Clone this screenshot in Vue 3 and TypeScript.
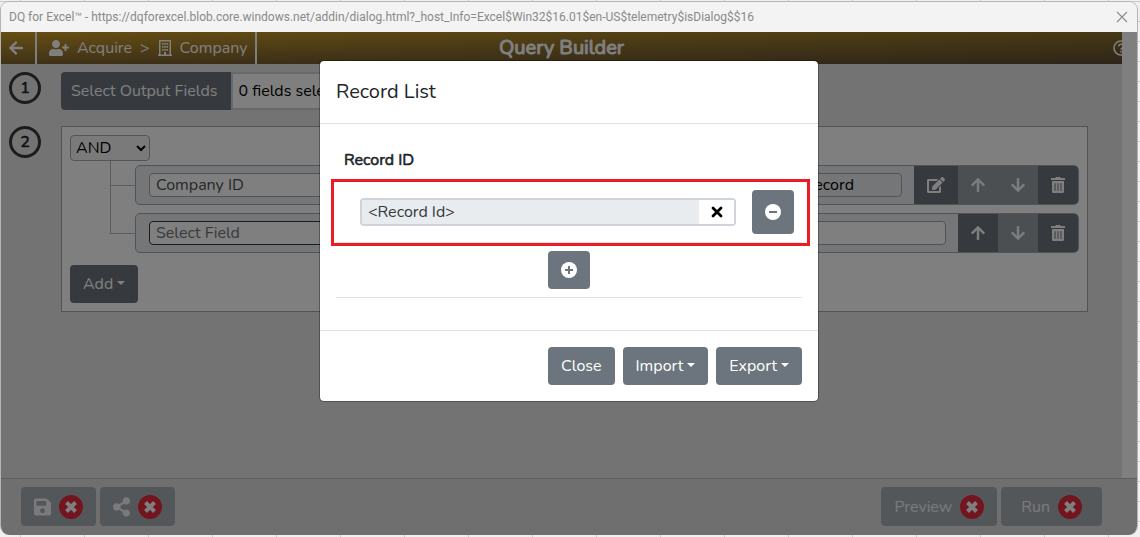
<script setup lang="ts">
import { ref } from 'vue'

interface Action {
  label: string
  icon: string
  disabled?: boolean
  wide?: boolean
}
interface Condition {
  field: string
  placeholder: string
  detail: string
  focused: boolean
  actions: Action[]
}

const arrow =
  'M34.9 289.5l-22.2-22.2c-9.4-9.4-9.4-24.6 0-33.9L207 39c9.4-9.4 24.6-9.4 33.9 0l194.3 194.3c9.4 9.4 9.4 24.6 0 33.9L413 289.4c-9.5 9.5-25 9.3-34.3-.4L264 168.6V456c0 13.3-10.7 24-24 24h-32c-13.3 0-24-10.7-24-24V168.6L69.2 289.1c-9.3 9.8-24.8 10-34.3.4z'
const icons: Record<string, { box: string; d: string }> = {
  up: { box: '0 0 448 512', d: arrow },
  down: { box: '0 0 448 512', d: arrow },
  edit: {
    box: '0 0 576 512',
    d: 'M402.6 83.2l90.2 90.2c3.8 3.8 3.8 10 0 13.8L274.4 405.6l-92.8 10.3c-12.4 1.4-22.9-9.1-21.5-21.5l10.3-92.8L388.8 83.2c3.8-3.8 10-3.8 13.8 0zm162-22.9l-48.8-48.8c-15.2-15.2-39.9-15.2-55.2 0l-35.4 35.4c-3.8 3.8-3.8 10 0 13.8l90.2 90.2c3.8 3.8 10 3.8 13.8 0l35.4-35.4c15.2-15.3 15.2-40 0-55.2zM384 346.2V448H64V128h229.8c3.2 0 6.2-1.3 8.5-3.5l40-40c7.6-7.6 2.2-20.5-8.5-20.5H48C21.5 64 0 85.5 0 112v352c0 26.5 21.5 48 48 48h352c26.5 0 48-21.5 48-48V306.2c0-10.7-12.9-16-20.5-8.5l-40 40c-2.2 2.3-3.5 5.3-3.5 8.5z',
  },
  trash: {
    box: '0 0 448 512',
    d: 'M32 464a48 48 0 0 0 48 48h288a48 48 0 0 0 48-48V128H32zm272-256a16 16 0 0 1 32 0v224a16 16 0 0 1-32 0zm-96 0a16 16 0 0 1 32 0v224a16 16 0 0 1-32 0zm-96 0a16 16 0 0 1 32 0v224a16 16 0 0 1-32 0zM432 32H312l-9.4-18.7A24 24 0 0 0 281.1 0H166.8a23.72 23.72 0 0 0-21.4 13.3L136 32H16A16 16 0 0 0 0 48v32a16 16 0 0 0 16 16h416a16 16 0 0 0 16-16V48a16 16 0 0 0-16-16z',
  },
}

const operator = ref('AND')
const recordId = ref('<Record Id>')
const outputFields = ref('0 fields selected')

const conditions = ref<Condition[]>([
  {
    field: 'Company ID',
    placeholder: 'Select Field',
    detail: '1 record',
    focused: false,
    actions: [
      { label: 'Edit', icon: 'edit', wide: true },
      { label: 'Move up', icon: 'up', disabled: true },
      { label: 'Move down', icon: 'down', disabled: true },
      { label: 'Delete', icon: 'trash' },
    ],
  },
  {
    field: '',
    placeholder: 'Select Field',
    detail: '',
    focused: true,
    actions: [
      { label: 'Move up', icon: 'up' },
      { label: 'Move down', icon: 'down', disabled: true },
      { label: 'Delete', icon: 'trash' },
    ],
  },
])
</script>

<template>
  <div class="sheet">
    <div class="window">
      <header class="titlebar">
        <span class="address">DQ for Excel™ - https://dqforexcel.blob.core.windows.net/addin/dialog.html?_host_Info=Excel$Win32$16.01$en-US$telemetry$isDialog$$16</span>
        <button class="win-close" aria-label="Close window">
          <svg viewBox="0 0 12 12" width="12" height="12"><path d="M1 1l10 10M11 1L1 11" fill="none" stroke="#8c8c8c" stroke-width="1.1" /></svg>
        </button>
      </header>

      <div class="content">
        <div class="scroller">
          <div class="page">
            <nav class="navbar">
              <a class="back" href="#" aria-label="Back">
                <svg viewBox="0 0 448 512" width="14" height="16"><path :d="arrow" transform="rotate(-90 224 256)" /></svg>
              </a>
              <div class="crumbs">
                <a href="#">
                  <svg viewBox="0 0 640 512" width="20" height="16"><path d="M624 208h-64v-64c0-8.8-7.2-16-16-16h-32c-8.8 0-16 7.2-16 16v64h-64c-8.8 0-16 7.2-16 16v32c0 8.8 7.2 16 16 16h64v64c0 8.8 7.2 16 16 16h32c8.8 0 16-7.2 16-16v-64h64c8.8 0 16-7.2 16-16v-32c0-8.8-7.2-16-16-16zm-400 48c70.7 0 128-57.3 128-128S294.7 0 224 0 96 57.3 96 128s57.3 128 128 128zm89.6 32h-16.7c-22.2 10.2-46.9 16-72.9 16s-50.6-5.8-72.9-16h-16.7C60.2 288 0 348.2 0 422.4V464c0 26.5 21.5 48 48 48h352c26.5 0 48-21.5 48-48v-41.6c0-74.2-60.2-134.4-134.4-134.4z" /></svg>
                  Acquire
                </a>
                <span>&gt;</span>
                <a href="#">
                  <svg viewBox="0 0 14 16" width="14" height="16">
                    <path fill-rule="evenodd" d="M1 .7Q1 0 1.7 0h10.600Q13 0 13 .7V14.600h1V16H0v-1.400h1zM2.500 1.500v13.100H6V12h2v2.600h3.500V1.500z" />
                    <path d="M4 3h1.600v1.800H4zM6.200 3h1.600v1.800H6.200zM8.400 3h1.600v1.800H8.400zM4 6h1.600v1.800H4zM6.200 6h1.600v1.800H6.200zM8.400 6h1.600v1.800H8.400zM4 9h1.600v1.800H4zM6.200 9h1.600v1.800H6.200zM8.400 9h1.600v1.800H8.400z" />
                  </svg>
                  Company
                </a>
              </div>
              <h1>Query Builder</h1>
              <a class="help" href="#" aria-label="Help">
                <svg viewBox="0 0 16 16" width="16" height="16" class="line"><circle cx="8" cy="8" r="7" /><path d="M5.600 6.300Q5.900 4.300 8 4.300q2.400 0 2.400 2 0 1.200-1.300 1.900-1.100.6-1.100 1.500M8 10.900v1.600" /></svg>
              </a>
            </nav>

            <main>
              <section class="step">
                <span class="num">1</span>
                <div class="output">
                  <button class="btn">Select Output Fields</button>
                  <input v-model="outputFields" aria-label="Output fields" readonly />
                </div>
              </section>

              <section class="step">
                <span class="num">2</span>
                <div class="panel">
                  <select v-model="operator" aria-label="Operator">
                    <option>AND</option>
                    <option>OR</option>
                  </select>
                  <ul class="tree">
                    <li v-for="(c, i) in conditions" :key="i">
                      <div class="rule">
                        <div class="fields">
                          <input v-model="c.field" :placeholder="c.placeholder" :class="{ focused: c.focused }" aria-label="Field" />
                          <input v-model="c.detail" class="detail" :class="{ filled: c.detail }" aria-label="Value" />
                        </div>
                        <button
                          v-for="a in c.actions"
                          :key="a.label"
                          class="act"
                          :class="{ wide: a.wide }"
                          :disabled="a.disabled"
                          :aria-label="a.label"
                        >
                          <svg :viewBox="icons[a.icon].box" height="16" :class="{ flip: a.icon === 'down' }"><path :d="icons[a.icon].d" /></svg>
                        </button>
                      </div>
                    </li>
                  </ul>
                  <button class="btn caret add">Add</button>
                </div>
              </section>
            </main>
          </div>
          <div class="scrollbar"></div>
        </div>

        <footer class="toolbar">
          <button class="tool" aria-label="Save">
            <svg viewBox="0 0 448 512" width="17" height="20"><path d="M433.941 129.941l-83.882-83.882A48 48 0 0 0 316.118 32H48C21.490 32 0 53.490 0 80v352c0 26.510 21.490 48 48 48h352c26.510 0 48-21.490 48-48V163.882a48 48 0 0 0-14.059-33.941zM224 416c-35.346 0-64-28.654-64-64 0-35.346 28.654-64 64-64s64 28.654 64 64c0 35.346-28.654 64-64 64zm96-304.520V212c0 6.627-5.373 12-12 12H76c-6.627 0-12-5.373-12-12V108c0-6.627 5.373-12 12-12h228.520c3.183 0 6.235 1.264 8.485 3.515l3.480 3.480A11.996 11.996 0 0 1 320 111.480z" /></svg>
            <svg class="bad" viewBox="0 0 24 24" width="24" height="24"><circle cx="12" cy="12" r="12" /><path d="M7.500 7.500l9 9M16.500 7.500l-9 9" /></svg>
          </button>
          <button class="tool" aria-label="Share">
            <svg viewBox="0 0 448 512" width="17" height="20"><path d="M352 320c-22.608 0-43.387 7.819-59.790 20.895l-102.486-64.054a96.551 96.551 0 0 0 0-41.683l102.486-64.054C308.613 184.181 329.392 192 352 192c53.019 0 96-42.981 96-96S405.019 0 352 0s-96 42.981-96 96c0 7.158.79 14.130 2.276 20.841L155.790 180.895C139.387 167.819 118.608 160 96 160c-53.019 0-96 42.981-96 96s42.981 96 96 96c22.608 0 43.387-7.819 59.790-20.895l102.486 64.054A96.301 96.301 0 0 0 256 416c0 53.019 42.981 96 96 96s96-42.981 96-96-42.981-96-96-96z" /></svg>
            <svg class="bad" viewBox="0 0 24 24" width="24" height="24"><circle cx="12" cy="12" r="12" /><path d="M7.500 7.500l9 9M16.500 7.500l-9 9" /></svg>
          </button>
          <span class="spacer"></span>
          <button class="tool">
            Preview
            <svg class="bad" viewBox="0 0 24 24" width="24" height="24"><circle cx="12" cy="12" r="12" /><path d="M7.500 7.500l9 9M16.500 7.500l-9 9" /></svg>
          </button>
          <button class="tool roomy">
            Run
            <svg class="bad" viewBox="0 0 24 24" width="24" height="24"><circle cx="12" cy="12" r="12" /><path d="M7.500 7.500l9 9M16.500 7.500l-9 9" /></svg>
          </button>
        </footer>

        <div class="backdrop">
          <div class="modal" role="dialog" aria-labelledby="modal-title">
            <h2 id="modal-title">Record List</h2>
            <div class="modal-body">
              <table>
                <thead>
                  <tr><th scope="col">Record ID</th></tr>
                </thead>
                <tbody>
                  <tr class="marked">
                    <td>
                      <div class="record">
                        <div class="group">
                          <input v-model="recordId" aria-label="Record ID" readonly />
                          <button class="clear" aria-label="Clear">
                            <svg viewBox="0 0 12 12" width="12" height="12"><path d="M2 2l8 8M10 2l-8 8" fill="none" stroke="#000" stroke-width="2.800" stroke-linecap="round" /></svg>
                          </button>
                        </div>
                        <button class="btn icon tall" aria-label="Remove record">
                          <svg viewBox="0 0 16 16" width="16" height="16"><circle cx="8" cy="8" r="8" /><path class="cut" d="M4 8h8" /></svg>
                        </button>
                      </div>
                    </td>
                  </tr>
                  <tr>
                    <td class="center">
                      <button class="btn icon" aria-label="Add record">
                        <svg viewBox="0 0 16 16" width="16" height="16"><circle cx="8" cy="8" r="8" /><path class="cut" d="M4 8h8M8 4v8" /></svg>
                      </button>
                    </td>
                  </tr>
                </tbody>
              </table>
            </div>
            <div class="modal-foot">
              <button class="btn">Close</button>
              <button class="btn caret">Import</button>
              <button class="btn caret">Export</button>
            </div>
          </div>
        </div>
      </div>
    </div>
  </div>
</template>

<style>
body {
  margin: 0;
}
</style>

<style scoped>
* {
  box-sizing: border-box;
}
.sheet {
  display: flex;
  min-height: 100vh;
  padding: 1px 2px 2px 0;
  background:
    repeating-linear-gradient(to right, transparent 0 20px, #c8c8c8 20px 21px, transparent 21px 64px),
    repeating-linear-gradient(to bottom, #f0f0f0 0 1px, #c8c8c8 1px 2px, #f0f0f0 2px 20px);
  font: 16px/24px Nunito, Lato, "Open Sans", sans-serif;
  color: #212529;
}
button,
input,
select {
  font: inherit;
  margin: 0;
}
button {
  cursor: pointer;
}
svg {
  display: block;
  fill: currentColor;
}
a {
  color: inherit;
  text-decoration: none;
}
.window {
  flex: 1;
  min-width: 0;
  display: flex;
  flex-direction: column;
  border: 1px solid #b4b4b4;
  border-bottom: 0;
  border-radius: 9px;
  overflow: hidden;
}
.titlebar {
  display: flex;
  align-items: center;
  justify-content: space-between;
  height: 30px;
  padding: 0 9px 0 8px;
  background: #f3f3f3;
  color: #8a8a8a;
  font: 12px/16px Roboto, "Open Sans", sans-serif;
  white-space: nowrap;
}
.win-close {
  padding: 0;
  border: 0;
  background: none;
}
.content {
  position: relative;
  flex: 1;
  display: flex;
  flex-direction: column;
}
.scroller {
  flex: 1;
  display: flex;
}
.page {
  flex: 1;
  min-width: 0;
  background: #e6e6e6;
  overflow: hidden;
}
.scrollbar {
  width: 15px;
  background: #fff;
}
.navbar {
  position: relative;
  display: flex;
  height: 32px;
  background: linear-gradient(to bottom, rgba(40, 35, 60, 0.05), rgba(40, 35, 60, 0.5)), linear-gradient(to right, #d6a424, #927428);
  color: #fff;
}
.back,
.crumbs {
  display: flex;
  align-items: center;
  border-right: 2px solid #fff;
}
.back {
  width: 36px;
  padding-left: 8px;
}
.crumbs {
  gap: 8px;
  padding: 0 8px 0 12px;
}
.crumbs a {
  display: flex;
  align-items: center;
  gap: 8px;
}
h1,
th,
.num {
  font-weight: 400;
  -webkit-text-stroke: 0.6px currentColor;
}
h1 {
  position: absolute;
  inset: 0;
  margin: 0;
  font-size: 20px;
  line-height: 32px;
  text-align: center;
  pointer-events: none;
  -webkit-text-stroke-width: 1px;
}
.help {
  position: absolute;
  top: 8px;
  right: -7px;
}
.line {
  fill: none;
  stroke: currentColor;
  stroke-width: 1.600;
}
main {
  display: grid;
  gap: 16px;
  padding: 8px 34px 16px 8px;
}
.step {
  display: flex;
  align-items: flex-start;
  gap: 20px;
}
.num {
  display: flex;
  align-items: center;
  justify-content: center;
  flex: none;
  width: 32px;
  height: 32px;
  border: 3px solid #343a40;
  border-radius: 50%;
}
.btn {
  height: 38px;
  padding: 0 13px;
  border: 0;
  border-radius: 4px;
  background: #6c757d;
  color: #fff;
  white-space: nowrap;
}
.btn.icon {
  padding: 0;
}
.caret::after {
  content: "";
  display: inline-block;
  margin-left: 4px;
  vertical-align: 4px;
  border: 4px solid transparent;
  border-top-color: currentColor;
  border-bottom: 0;
}
.output {
  display: flex;
}
.output .btn {
  padding: 0 13px 0 10px;
  border-radius: 4px 0 0 4px;
}
.output input {
  width: 300px;
  padding: 0 6px;
  border: 2px solid #ced4da;
  background: #fff;
}
.panel {
  flex: 1;
  min-width: 0;
  padding: 8px;
  border: 1px solid #a4a8ae;
  background: #fff;
}
select {
  display: block;
  width: 80px;
  height: 26px;
  padding: 0 1px;
  border: 1px solid #a4a8ae;
  border-radius: 4px;
  background: #f4f5f6;
  color: #000;
}
.tree {
  margin: 0 0 0 40px;
  padding: 4px 0 12px;
  list-style: none;
}
.tree li {
  position: relative;
  padding: 0 0 8px 25px;
}
.tree li:last-child {
  padding-bottom: 0;
}
.tree li::before {
  content: "";
  position: absolute;
  left: 0;
  top: -4px;
  width: 25px;
  height: 24px;
  border: solid #b4b8be;
  border-width: 0 0 1px 1px;
}
.tree li + li::before {
  top: -28px;
  height: 48px;
}
.add {
  display: block;
}
.rule {
  display: flex;
  height: 40px;
  border: 1px solid #a0a8b0;
  border-radius: 5px;
  background: #e9ecef;
  overflow: hidden;
}
.fields {
  flex: 1;
  display: flex;
  gap: 24px;
  padding: 7px 12px 7px 13px;
}
.fields input {
  flex: 1;
  min-width: 0;
  padding: 0 6px;
  border: 1px solid #a0a8b0;
  border-radius: 4px;
  background: #fff;
  color: #495057;
}
.fields .detail {
  flex: none;
  width: 148px;
}
.fields .filled {
  background: #e9ecef;
  color: #000;
  padding-left: 40px;
}
.fields .focused {
  border-color: #343a40;
}
.fields input::placeholder {
  color: #6c757d;
}
.act {
  display: flex;
  align-items: center;
  justify-content: center;
  width: 40px;
  padding: 0;
  border: 0;
  background: #6c757d;
  color: #fff;
}
.act.wide {
  width: 44px;
}
.act:disabled {
  opacity: 0.65;
}
.flip {
  transform: rotate(180deg);
}
.toolbar {
  display: flex;
  gap: 4px;
  height: 57px;
  padding: 8px 35px 8px 20px;
  border-top: 1px solid #bcbcbc;
  background: #dedede;
}
.spacer {
  flex: 1;
}
.tool {
  display: flex;
  align-items: center;
  gap: 8px;
  height: 39px;
  padding: 0 13px;
  border: 0;
  border-radius: 4px;
  background: #a9aeb4;
  color: #f4f4f4;
}
.roomy {
  padding: 0 20px;
}
.bad circle {
  fill: #e42a3c;
}
.bad path {
  fill: none;
  stroke: #fff;
  stroke-width: 4;
}
.backdrop {
  position: absolute;
  inset: 0;
  padding: 28px 16px;
  background: rgba(0, 0, 0, 0.5);
}
.modal {
  max-width: 500px;
  margin: 0 auto;
  border: 1px solid rgba(0, 0, 0, 0.3);
  border-radius: 5px;
  background: #fff;
  background-clip: padding-box;
}
h2 {
  margin: 0;
  padding: 16px;
  border-bottom: 1px solid #dee2e6;
  font-size: 20px;
  line-height: 30px;
  font-weight: 400;
}
.modal-body {
  padding: 16px 16px 32px;
}
table {
  width: 100%;
  border-collapse: collapse;
}
th {
  padding: 8px 8px 10px;
  text-align: left;
}
td {
  padding: 8px;
  border-bottom: 1px solid #dee2e6;
}
.marked td {
  position: relative;
}
.marked td::after {
  content: "";
  position: absolute;
  inset: -3px -8px -4px -5px;
  border: 3px solid #ed1c24;
  pointer-events: none;
}
.record {
  display: flex;
  align-items: center;
  gap: 16px;
  padding-left: 16px;
}
.group {
  flex: 1;
  display: flex;
  height: 28px;
  border: 2px solid #ced4da;
  border-radius: 4px;
}
.group input {
  flex: 1;
  min-width: 0;
  padding: 0 6px;
  border: 0;
  background: #e9ecef;
  color: #343a40;
}
.clear {
  display: flex;
  align-items: center;
  justify-content: center;
  width: 35px;
  padding: 0;
  border: 0;
  background: #fff;
}
.icon {
  display: inline-flex;
  align-items: center;
  justify-content: center;
  width: 42px;
  vertical-align: top;
}
.tall {
  height: 44px;
}
.cut {
  fill: none;
  stroke: #6c757d;
  stroke-width: 2;
}
.center {
  text-align: center;
}
.modal-foot {
  display: flex;
  justify-content: flex-end;
  gap: 8px;
  padding: 16px;
  border-top: 1px solid #dee2e6;
}
</style>
